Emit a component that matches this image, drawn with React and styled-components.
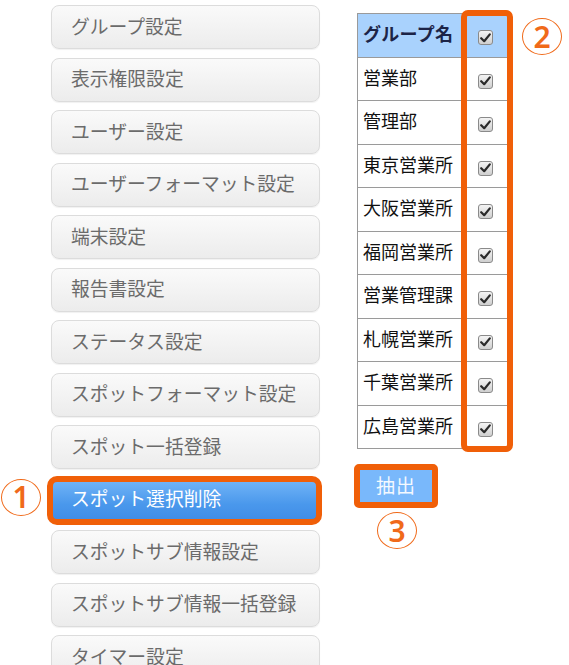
import React from "react";
import styled, { createGlobalStyle } from "styled-components";

const Global = createGlobalStyle`
  html, body { margin: 0; padding: 0; background: #fff; }
  body { font-family: "Noto Sans CJK JP", "Noto Sans", sans-serif; }
`;

const ORANGE = "#f05f08";

const Page = styled.div`
  display: flex;
  align-items: flex-start;
  width: 569px;
  height: 665px;
  overflow: hidden;
`;

const Menu = styled.div`
  display: flex;
  flex-direction: column;
  gap: 8.5px;
  margin-left: 51px;
  padding-top: 5px;
  width: 269px;
  flex-shrink: 0;
`;

const MenuButton = styled.div`
  position: relative;
  box-sizing: border-box;
  height: 44px;
  display: flex;
  align-items: center;
  padding-left: 19px;
  padding-bottom: 4px;
  border-radius: 8px;
  font-size: 18.8px;
  white-space: nowrap;
  color: ${(p) => (p.$active ? "#ffffff" : "#6b6b6b")};
  border: 1px solid ${(p) => (p.$active ? "#4b95e6" : "#dcdcdc")};
  background: ${(p) =>
    p.$active
      ? "linear-gradient(#74b6f8, #4a98ec 60%, #3f8ce6)"
      : "linear-gradient(#fafafa, #ececec)"};
  box-shadow: 0 1px 1px rgba(0, 0, 0, 0.06);
  ${(p) =>
    p.$active &&
    `
    &::after {
      content: "";
      position: absolute;
      left: -5px;
      right: -3px;
      top: -3px;
      bottom: -4px;
      border: 6px solid ${ORANGE};
      border-radius: 10px;
    }
  `}
`;

const Circled = styled.div`
  position: absolute;
  box-sizing: border-box;
  width: ${(p) => p.$w || 40}px;
  height: ${(p) => p.$h || 37}px;
  border: 1.5px solid #f06a1a;
  border-radius: 50%;
  color: #f06a1a;
  display: flex;
  align-items: center;
  justify-content: center;
  font-family: "Noto Sans", "Liberation Sans", sans-serif;
  font-weight: 600;
  font-size: 30px;
  line-height: 1;
  background: #fff;
`;

const Side = styled.div`
  display: flex;
  flex-direction: column;
  align-items: flex-start;
  margin-left: 37px;
  padding-top: 13px;
`;

const TableWrap = styled.div`
  position: relative;
`;

const Table = styled.table`
  border-collapse: collapse;
  width: 151px;
  border: 1px solid #9a9a9a;
`;

const Row = styled.tr`
  height: 43.5px;
  background: ${(p) => (p.$head ? "#a9d2fd" : "#fff")};
`;

const NameCell = styled.td`
  box-sizing: border-box;
  width: 105px;
  padding: 0 0 4px 5px;
  border: 1px solid #9a9a9a;
  font-size: 18px;
  white-space: nowrap;
  font-weight: ${(p) => (p.$head ? 700 : 400)};
  color: ${(p) => (p.$head ? "#1c2447" : "#111")};
  letter-spacing: ${(p) => (p.$head ? "0.3px" : "0")};
`;

const CheckCell = styled.td`
  border: 1px solid #9a9a9a;
  text-align: center;
  vertical-align: middle;
`;

const Box = styled.span`
  display: inline-flex;
  align-items: center;
  justify-content: center;
  box-sizing: border-box;
  width: 15px;
  height: 15px;
  border: 1px solid #8a8a8a;
  border-radius: 3px;
  background: linear-gradient(#f4f4f4, #cfcfcf);
  vertical-align: middle;
`;

const ColumnHighlight = styled.div`
  position: absolute;
  left: 104px;
  top: -3px;
  width: 52px;
  bottom: -3px;
  box-sizing: border-box;
  border: 6px solid ${ORANGE};
  border-radius: 7px;
  pointer-events: none;
`;

const ExtractWrap = styled.div`
  margin-top: 15px;
  margin-left: -3px;
  border: 6px solid ${ORANGE};
  border-radius: 5px;
  display: flex;
`;

const ExtractButton = styled.div`
  width: 72px;
  height: 32px;
  padding-bottom: 3px;
  box-sizing: border-box;
  background: #79b8fb;
  color: #f4f9ff;
  font-size: 19px;
  display: flex;
  align-items: center;
  justify-content: center;
  letter-spacing: 1px;
`;

const Step3Row = styled.div`
  position: relative;
  width: 80px;
  height: 50px;
`;

const Check = () => (
  <Box>
    <svg width="11" height="10" viewBox="0 0 11 10">
      <path d="M1.2 5.2 L4.2 8.2 L9.8 1.4" fill="none" stroke="#2a2a2a" strokeWidth="2.2" strokeLinejoin="round" strokeLinecap="round" />
    </svg>
  </Box>
);

const menu = [
  "グループ設定",
  "表示権限設定",
  "ユーザー設定",
  "ユーザーフォーマット設定",
  "端末設定",
  "報告書設定",
  "ステータス設定",
  "スポットフォーマット設定",
  "スポット一括登録",
  "スポット選択削除",
  "スポットサブ情報設定",
  "スポットサブ情報一括登録",
  "タイマー設定",
];

const groups = [
  "営業部",
  "管理部",
  "東京営業所",
  "大阪営業所",
  "福岡営業所",
  "営業管理課",
  "札幌営業所",
  "千葉営業所",
  "広島営業所",
];

export default function App() {
  return (
    <>
      <Global />
      <Page>
        <Menu>
          {menu.map((m) => (
            <MenuButton key={m} $active={m === "スポット選択削除"}>
              {m}
              {m === "スポット選択削除" && (
                <Circled style={{ left: -51, top: 0 }}>1</Circled>
              )}
            </MenuButton>
          ))}
        </Menu>
        <Side>
          <TableWrap>
            <Table>
              <tbody>
                <Row $head>
                  <NameCell $head>グループ名</NameCell>
                  <CheckCell>
                    <Check />
                  </CheckCell>
                </Row>
                {groups.map((g) => (
                  <Row key={g}>
                    <NameCell>{g}</NameCell>
                    <CheckCell>
                      <Check />
                    </CheckCell>
                  </Row>
                ))}
              </tbody>
            </Table>
            <ColumnHighlight />
            <Circled style={{ left: 165, top: 5 }}>2</Circled>
          </TableWrap>
          <ExtractWrap>
            <ExtractButton>抽出</ExtractButton>
          </ExtractWrap>
          <Step3Row>
            <Circled style={{ left: 20, top: 4 }}>3</Circled>
          </Step3Row>
        </Side>
      </Page>
    </>
  );
}
